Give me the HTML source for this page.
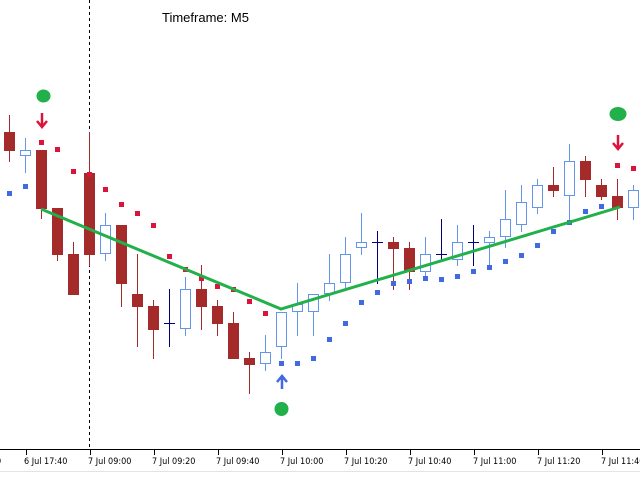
<!DOCTYPE html>
<html><head><style>
body{margin:0;background:#fff;width:640px;height:480px;overflow:hidden}
svg{display:block}
</style></head><body>
<svg width="640" height="480" xmlns="http://www.w3.org/2000/svg" shape-rendering="crispEdges">
<rect width="640" height="480" fill="#fff"/>
<line x1="89.5" y1="0" x2="89.5" y2="450" stroke="#000" stroke-dasharray="3,3"/>
<text x="162" y="22" font-family="Liberation Sans, sans-serif" font-size="13" fill="#000">Timeframe: M5</text>
<g stroke="#a52a2a">
<line x1="9.5" y1="115" x2="9.5" y2="162"/><line x1="41.5" y1="150" x2="41.5" y2="219"/><line x1="57.5" y1="208" x2="57.5" y2="261"/><line x1="73.5" y1="242" x2="73.5" y2="295"/><line x1="89.5" y1="132" x2="89.5" y2="266"/><line x1="121.5" y1="225" x2="121.5" y2="307"/><line x1="137.5" y1="254" x2="137.5" y2="347"/><line x1="153.5" y1="300" x2="153.5" y2="359"/><line x1="201.5" y1="265" x2="201.5" y2="330"/><line x1="217.5" y1="300" x2="217.5" y2="336"/><line x1="233.5" y1="312" x2="233.5" y2="359"/><line x1="249.5" y1="352" x2="249.5" y2="394"/><line x1="393.5" y1="237" x2="393.5" y2="290"/><line x1="409.5" y1="242" x2="409.5" y2="290"/><line x1="553.5" y1="167" x2="553.5" y2="197"/><line x1="585.5" y1="156" x2="585.5" y2="197"/><line x1="601.5" y1="179" x2="601.5" y2="200"/><line x1="617.5" y1="179" x2="617.5" y2="220"/>
</g>
<g fill="#a52a2a">
<rect x="4" y="132" width="11" height="19"/><rect x="36" y="150" width="11" height="59"/><rect x="52" y="208" width="11" height="47"/><rect x="68" y="254" width="11" height="41"/><rect x="84" y="173" width="11" height="82"/><rect x="116" y="225" width="11" height="59"/><rect x="132" y="294" width="11" height="13"/><rect x="148" y="306" width="11" height="24"/><rect x="196" y="289" width="11" height="18"/><rect x="212" y="306" width="11" height="18"/><rect x="228" y="323" width="11" height="36"/><rect x="244" y="358" width="11" height="7"/><rect x="388" y="242" width="11" height="7"/><rect x="404" y="248" width="11" height="24"/><rect x="548" y="185" width="11" height="6"/><rect x="580" y="161" width="11" height="19"/><rect x="596" y="185" width="11" height="12"/><rect x="612" y="196" width="11" height="12"/>
</g>
<g stroke="#6495ed">
<line x1="25.5" y1="138" x2="25.5" y2="173"/><line x1="105.5" y1="213" x2="105.5" y2="261"/><line x1="185.5" y1="277" x2="185.5" y2="336"/><line x1="265.5" y1="335" x2="265.5" y2="371"/><line x1="281.5" y1="312" x2="281.5" y2="359"/><line x1="297.5" y1="283" x2="297.5" y2="336"/><line x1="313.5" y1="294" x2="313.5" y2="336"/><line x1="329.5" y1="254" x2="329.5" y2="301"/><line x1="345.5" y1="237" x2="345.5" y2="290"/><line x1="361.5" y1="213" x2="361.5" y2="255"/><line x1="425.5" y1="237" x2="425.5" y2="280"/><line x1="457.5" y1="225" x2="457.5" y2="266"/><line x1="489.5" y1="231" x2="489.5" y2="267"/><line x1="505.5" y1="190" x2="505.5" y2="248"/><line x1="521.5" y1="185" x2="521.5" y2="232"/><line x1="537.5" y1="179" x2="537.5" y2="214"/><line x1="569.5" y1="144" x2="569.5" y2="222"/><line x1="633.5" y1="185" x2="633.5" y2="220"/>
</g>
<g fill="#fff" stroke="#6495ed">
<rect x="20.5" y="150.5" width="10" height="5"/><rect x="100.5" y="225.5" width="10" height="28"/><rect x="180.5" y="289.5" width="10" height="39"/><rect x="260.5" y="352.5" width="10" height="11"/><rect x="276.5" y="312.5" width="10" height="34"/><rect x="292.5" y="304.5" width="10" height="7"/><rect x="308.5" y="294.5" width="10" height="17"/><rect x="324.5" y="283.5" width="10" height="10"/><rect x="340.5" y="254.5" width="10" height="28"/><rect x="356.5" y="242.5" width="10" height="5"/><rect x="420.5" y="254.5" width="10" height="17"/><rect x="452.5" y="242.5" width="10" height="17"/><rect x="484.5" y="237.5" width="10" height="5"/><rect x="500.5" y="219.5" width="10" height="17"/><rect x="516.5" y="202.5" width="10" height="22"/><rect x="532.5" y="185.5" width="10" height="22"/><rect x="564.5" y="161.5" width="10" height="34"/><rect x="628.5" y="190.5" width="10" height="17"/>
</g>
<g stroke="#000080">
<line x1="169.5" y1="289" x2="169.5" y2="347"/><line x1="164" y1="323.5" x2="175" y2="323.5"/>
<line x1="377.5" y1="231" x2="377.5" y2="284"/><line x1="372" y1="242.5" x2="383" y2="242.5"/>
<line x1="441.5" y1="219" x2="441.5" y2="262"/><line x1="436" y1="254.5" x2="447" y2="254.5"/>
<line x1="473.5" y1="225" x2="473.5" y2="266"/><line x1="468" y1="242.5" x2="479" y2="242.5"/>
</g>
<g fill="#dc143c">
<rect x="39" y="140" width="5" height="5"/><rect x="55" y="147" width="5" height="5"/><rect x="71" y="169" width="5" height="5"/><rect x="87" y="172" width="5" height="5"/><rect x="103" y="187" width="5" height="5"/><rect x="119" y="202" width="5" height="5"/><rect x="135" y="211" width="5" height="5"/><rect x="151" y="223" width="5" height="5"/><rect x="167" y="254" width="5" height="5"/><rect x="183" y="267" width="5" height="5"/><rect x="199" y="276" width="5" height="5"/><rect x="215" y="284" width="5" height="5"/><rect x="231" y="287" width="5" height="5"/><rect x="247" y="299" width="5" height="5"/><rect x="263" y="311" width="5" height="5"/><rect x="615" y="163" width="5" height="5"/><rect x="631" y="166" width="5" height="5"/>
</g>
<g fill="#4169e1">
<rect x="7" y="191" width="5" height="5"/><rect x="23" y="184" width="5" height="5"/><rect x="279" y="361" width="5" height="5"/><rect x="295" y="361" width="5" height="5"/><rect x="311" y="356" width="5" height="5"/><rect x="327" y="337" width="5" height="5"/><rect x="343" y="321" width="5" height="5"/><rect x="359" y="300" width="5" height="5"/><rect x="375" y="290" width="5" height="5"/><rect x="391" y="281" width="5" height="5"/><rect x="407" y="279" width="5" height="5"/><rect x="423" y="276" width="5" height="5"/><rect x="439" y="277" width="5" height="5"/><rect x="455" y="274" width="5" height="5"/><rect x="471" y="269" width="5" height="5"/><rect x="487" y="265" width="5" height="5"/><rect x="503" y="259" width="5" height="5"/><rect x="519" y="253" width="5" height="5"/><rect x="535" y="243" width="5" height="5"/><rect x="551" y="229" width="5" height="5"/><rect x="567" y="220" width="5" height="5"/><rect x="583" y="209" width="5" height="5"/><rect x="599" y="204" width="5" height="5"/>
</g>
<polyline points="41,209 281,309 620,207" fill="none" stroke="#22b04a" stroke-width="3" shape-rendering="auto"/>
<g fill="#22b04a" shape-rendering="auto">
<ellipse cx="43.5" cy="96" rx="7" ry="6.5"/><ellipse cx="281.5" cy="409" rx="7" ry="7"/><ellipse cx="618" cy="114" rx="8.5" ry="7"/>
</g>
<g fill="none" stroke="#dc143c" stroke-width="2.5" shape-rendering="auto">
<path d="M42 113V126M37 121L42 127L47 121"/>
<path d="M618 135V148M613 143L618 149L623 143"/>
</g>
<path d="M282 389V377M277 382L282 376L287 382" fill="none" stroke="#4169e1" stroke-width="2.5" shape-rendering="auto"/>
<line x1="0" y1="449.5" x2="640" y2="449.5" stroke="#000"/>
<line x1="0" y1="471.5" x2="640" y2="471.5" stroke="#e4e4e4"/>
<g stroke="#000">
<line x1="26.5" y1="450" x2="26.5" y2="455"/><line x1="90.5" y1="450" x2="90.5" y2="455"/><line x1="154.5" y1="450" x2="154.5" y2="455"/><line x1="218.5" y1="450" x2="218.5" y2="455"/><line x1="282.5" y1="450" x2="282.5" y2="455"/><line x1="346.5" y1="450" x2="346.5" y2="455"/><line x1="410.5" y1="450" x2="410.5" y2="455"/><line x1="474.5" y1="450" x2="474.5" y2="455"/><line x1="538.5" y1="450" x2="538.5" y2="455"/><line x1="602.5" y1="450" x2="602.5" y2="455"/>
</g>
<g font-family="DejaVu Sans Condensed, Liberation Sans, sans-serif" font-size="9" fill="#000">
<text x="-4" y="464">0</text>
<text x="24" y="464">6 Jul 17:40</text>
<text x="88" y="464">7 Jul 09:00</text>
<text x="152" y="464">7 Jul 09:20</text>
<text x="216" y="464">7 Jul 09:40</text>
<text x="280" y="464">7 Jul 10:00</text>
<text x="344" y="464">7 Jul 10:20</text>
<text x="408" y="464">7 Jul 10:40</text>
<text x="473" y="464">7 Jul 11:00</text>
<text x="537" y="464">7 Jul 11:20</text>
<text x="601" y="464">7 Jul 11:40</text>
</g>
</svg>
</body></html>
